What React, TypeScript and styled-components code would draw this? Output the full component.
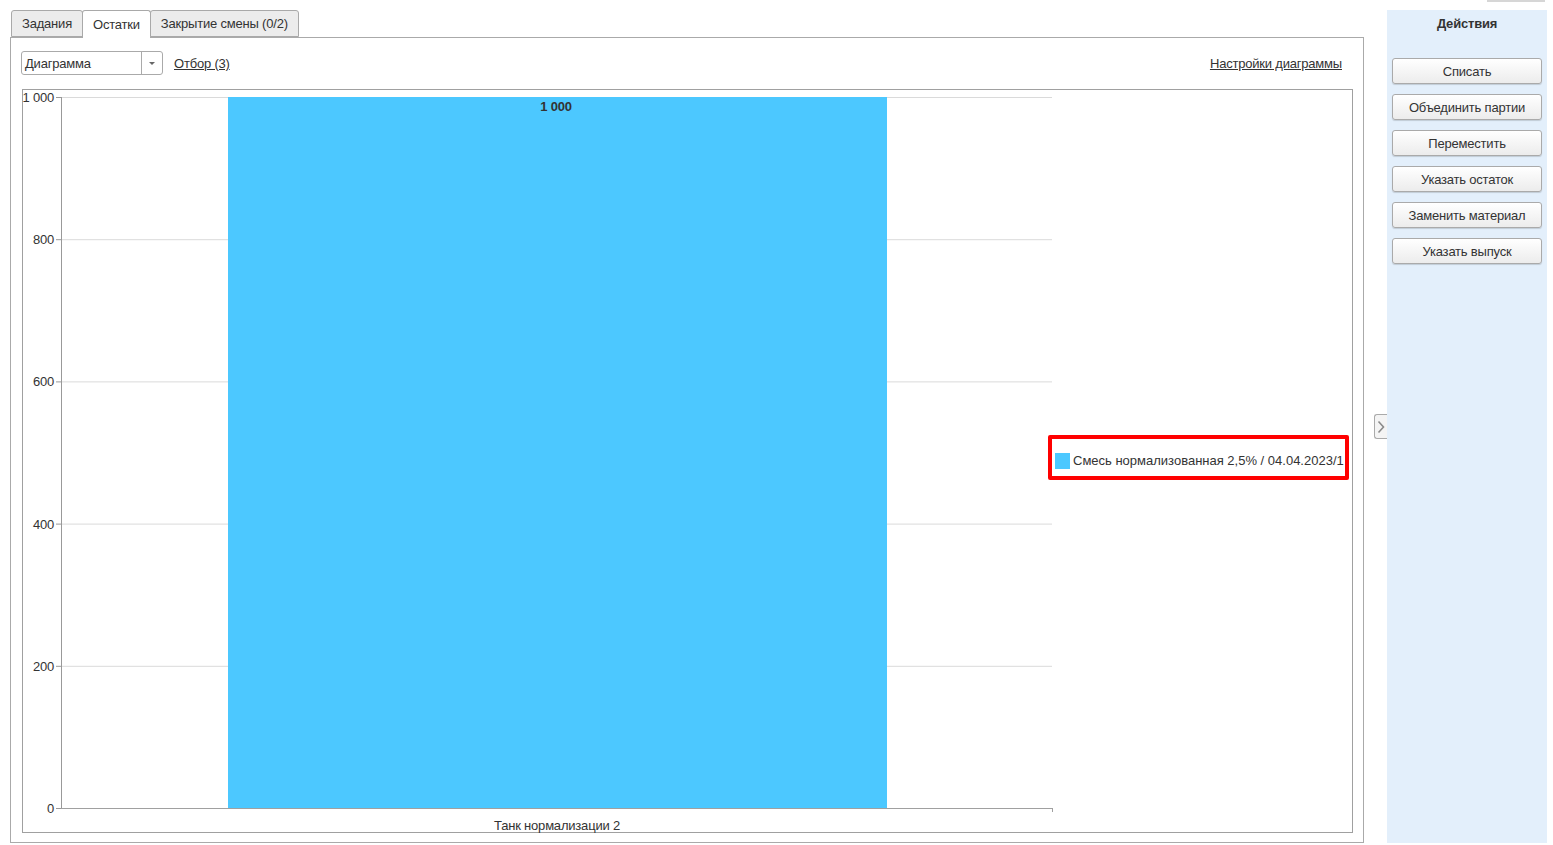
import styled, { createGlobalStyle } from "styled-components";

const GlobalStyle = createGlobalStyle`
    html, body {
        margin: 0;
        padding: 0;
        background: #ffffff;
    }
    body {
        font-family: "Liberation Sans", Arial, sans-serif;
        font-size: 13px;
        letter-spacing: -0.2px;
        color: #333333;
    }
    * {
        box-sizing: border-box;
    }
`;

const Page = styled.div`
    display: flex;
    height: 845px;
    padding: 10px 6px 2px 10px;
    position: relative;
`;

const TopNub = styled.div`
    position: absolute;
    top: 0;
    left: 1487px;
    width: 58px;
    height: 2px;
    background: #d6d6d6;
`;

const Main = styled.div`
    width: 1354px;
    display: flex;
    flex-direction: column;
`;

const Tabs = styled.div`
    display: flex;
    height: 27px;
    padding-left: 1px;
    position: relative;
    z-index: 1;
`;

const Tab = styled.div<{ $active?: boolean }>`
    height: ${(p) => (p.$active ? "28px" : "27px")};
    padding: 0 10px;
    display: flex;
    align-items: center;
    border: 1px solid #a9a9a9;
    border-bottom: ${(p) => (p.$active ? "none" : "1px solid #a9a9a9")};
    border-radius: 3px 3px 0 0;
    background: ${(p) => (p.$active ? "#ffffff" : "#ececec")};
    color: #333333;
    margin-right: -1px;
    padding-bottom: ${(p) => (p.$active ? "1px" : "0")};
    white-space: nowrap;
`;

const Panel = styled.div`
    flex: 1;
    border: 1px solid #aaaaaa;
    display: flex;
    flex-direction: column;
    padding: 13px 10px 9px 11px;
    gap: 14px;
    min-height: 0;
`;

const Toolbar = styled.div`
    height: 24px;
    display: flex;
    align-items: center;
    margin-left: -1px;
`;

const Select = styled.div`
    width: 142px;
    height: 24px;
    border: 1px solid #aaaaaa;
    border-radius: 3px;
    display: flex;
    align-items: stretch;
    background: #ffffff;
`;

const SelectValue = styled.div`
    flex: 1;
    display: flex;
    align-items: center;
    padding-left: 3px;
    color: #333333;
`;

const SelectArrow = styled.div`
    width: 21px;
    border-left: 1px solid #aaaaaa;
    display: flex;
    align-items: center;
    justify-content: center;
    &::after {
        content: "";
        border-left: 3px solid transparent;
        border-right: 3px solid transparent;
        border-top: 3px solid #666666;
    }
`;

const LinkText = styled.a<{ $right?: boolean }>`
    color: #333333;
    text-decoration: underline;
    margin-left: ${(p) => (p.$right ? "auto" : "11px")};
    margin-right: ${(p) => (p.$right ? "11px" : "0")};
    cursor: pointer;
`;

const ChartBox = styled.div`
    flex: 1;
    border: 1px solid #a0a0a0;
    display: flex;
    align-items: center;
    min-height: 0;
`;

const Plot = styled.svg`
    width: 1025px;
    height: 742px;
    flex-shrink: 0;
    display: block;
    overflow: visible;
    font-family: "Liberation Sans", Arial, sans-serif;
    font-size: 13px;
`;

const Legend = styled.div`
    width: 301px;
    height: 45px;
    margin-bottom: 8px;
    border: 4px solid #ff0000;
    border-radius: 2px;
    display: flex;
    align-items: flex-end;
    padding: 0 0 7px 3px;
    gap: 3px;
    white-space: nowrap;
    letter-spacing: 0;
    line-height: 16px;
    color: #333333;
    background: #ffffff;
    position: relative;
`;

const Swatch = styled.span`
    width: 15px;
    height: 16px;
    background: #4cc8ff;
    flex-shrink: 0;
`;

const Toggle = styled.div`
    width: 23px;
    display: flex;
    align-items: center;
    justify-content: flex-end;
`;

const ToggleButton = styled.div`
    width: 13px;
    height: 25px;
    border: 1px solid #aaaaaa;
    border-right: none;
    border-radius: 3px 0 0 3px;
    background: #f4f4f4;
    display: flex;
    align-items: center;
    justify-content: center;
`;

const Side = styled.div`
    width: 160px;
    background: #e3effb;
    display: flex;
    flex-direction: column;
    align-items: center;
    padding-top: 6px;
`;

const SideTitle = styled.div`
    font-weight: bold;
    color: #333333;
    height: 16px;
    line-height: 16px;
    margin-bottom: 26px;
`;

const ActionList = styled.div`
    display: flex;
    flex-direction: column;
    gap: 10px;
`;

const ActionButton = styled.button`
    width: 150px;
    height: 26px;
    border: 1px solid #aaaaaa;
    border-radius: 3px;
    background: linear-gradient(#ffffff, #ececec);
    box-shadow: 0 1px 1px rgba(0, 0, 0, 0.15);
    font-family: "Liberation Sans", Arial, sans-serif;
    font-size: 13px;
    letter-spacing: -0.2px;
    color: #333333;
    padding: 0;
    cursor: pointer;
`;

const ticks = [1000, 800, 600, 400, 200, 0];
const top = 7;
const bottom = 718;
const axisX = 38;
const endX = 1029;

function yOf(v: number) {
    return bottom - ((bottom - top) * v) / 1000;
}

function fmt(v: number) {
    return v >= 1000 ? "1 000" : String(v);
}

const actions = [
    "Списать",
    "Объединить партии",
    "Переместить",
    "Указать остаток",
    "Заменить материал",
    "Указать выпуск",
];

function App() {
    return (
        <>
            <GlobalStyle />
            <Page>
                <TopNub />
                <Main>
                    <Tabs>
                        <Tab>Задания</Tab>
                        <Tab $active>Остатки</Tab>
                        <Tab>Закрытие смены (0/2)</Tab>
                    </Tabs>
                    <Panel>
                        <Toolbar>
                            <Select>
                                <SelectValue>Диаграмма</SelectValue>
                                <SelectArrow />
                            </Select>
                            <LinkText>Отбор (3)</LinkText>
                            <LinkText $right>Настройки диаграммы</LinkText>
                        </Toolbar>
                        <ChartBox>
                            <Plot viewBox="0 0 1025 742">
                                {ticks.map((t) => (
                                    <g key={t}>
                                        {t > 0 && (
                                            <line x1={axisX} x2={endX} y1={yOf(t) + 0.5} y2={yOf(t) + 0.5} stroke="#dadada" />
                                        )}
                                        <line x1={axisX - 5} x2={axisX} y1={yOf(t) + 0.5} y2={yOf(t) + 0.5} stroke="#999999" />
                                        <text x={31} y={yOf(t) + 5} textAnchor="end" fill="#333333">
                                            {fmt(t)}
                                        </text>
                                    </g>
                                ))}
                                <rect x={205} y={top} width={659} height={bottom - top} fill="#4cc8ff" />
                                <line x1={axisX + 0.5} x2={axisX + 0.5} y1={top} y2={bottom} stroke="#999999" />
                                <line x1={axisX} x2={endX} y1={bottom + 0.5} y2={bottom + 0.5} stroke="#a0a0a0" />
                                <line x1={endX + 0.5} x2={endX + 0.5} y1={bottom} y2={bottom + 4} stroke="#a0a0a0" />
                                <text x={533} y={21} textAnchor="middle" fill="#333333" fontWeight="bold">
                                    1 000
                                </text>
                                <text x={534} y={740} textAnchor="middle" fill="#333333">
                                    Танк нормализации 2
                                </text>
                            </Plot>
                            <Legend>
                                <Swatch />
                                Смесь нормализованная 2,5% / 04.04.2023/1
                            </Legend>
                        </ChartBox>
                    </Panel>
                </Main>
                <Toggle>
                    <ToggleButton>
                        <svg width="8" height="14" viewBox="0 0 8 14">
                            <path d="M1.5 1.5 L6.5 7 L1.5 12.5" fill="none" stroke="#8a8a8a" strokeWidth="1.6" />
                        </svg>
                    </ToggleButton>
                </Toggle>
                <Side>
                    <SideTitle>Действия</SideTitle>
                    <ActionList>
                        {actions.map((a) => (
                            <ActionButton key={a}>{a}</ActionButton>
                        ))}
                    </ActionList>
                </Side>
            </Page>
        </>
    );
}

export default App;
